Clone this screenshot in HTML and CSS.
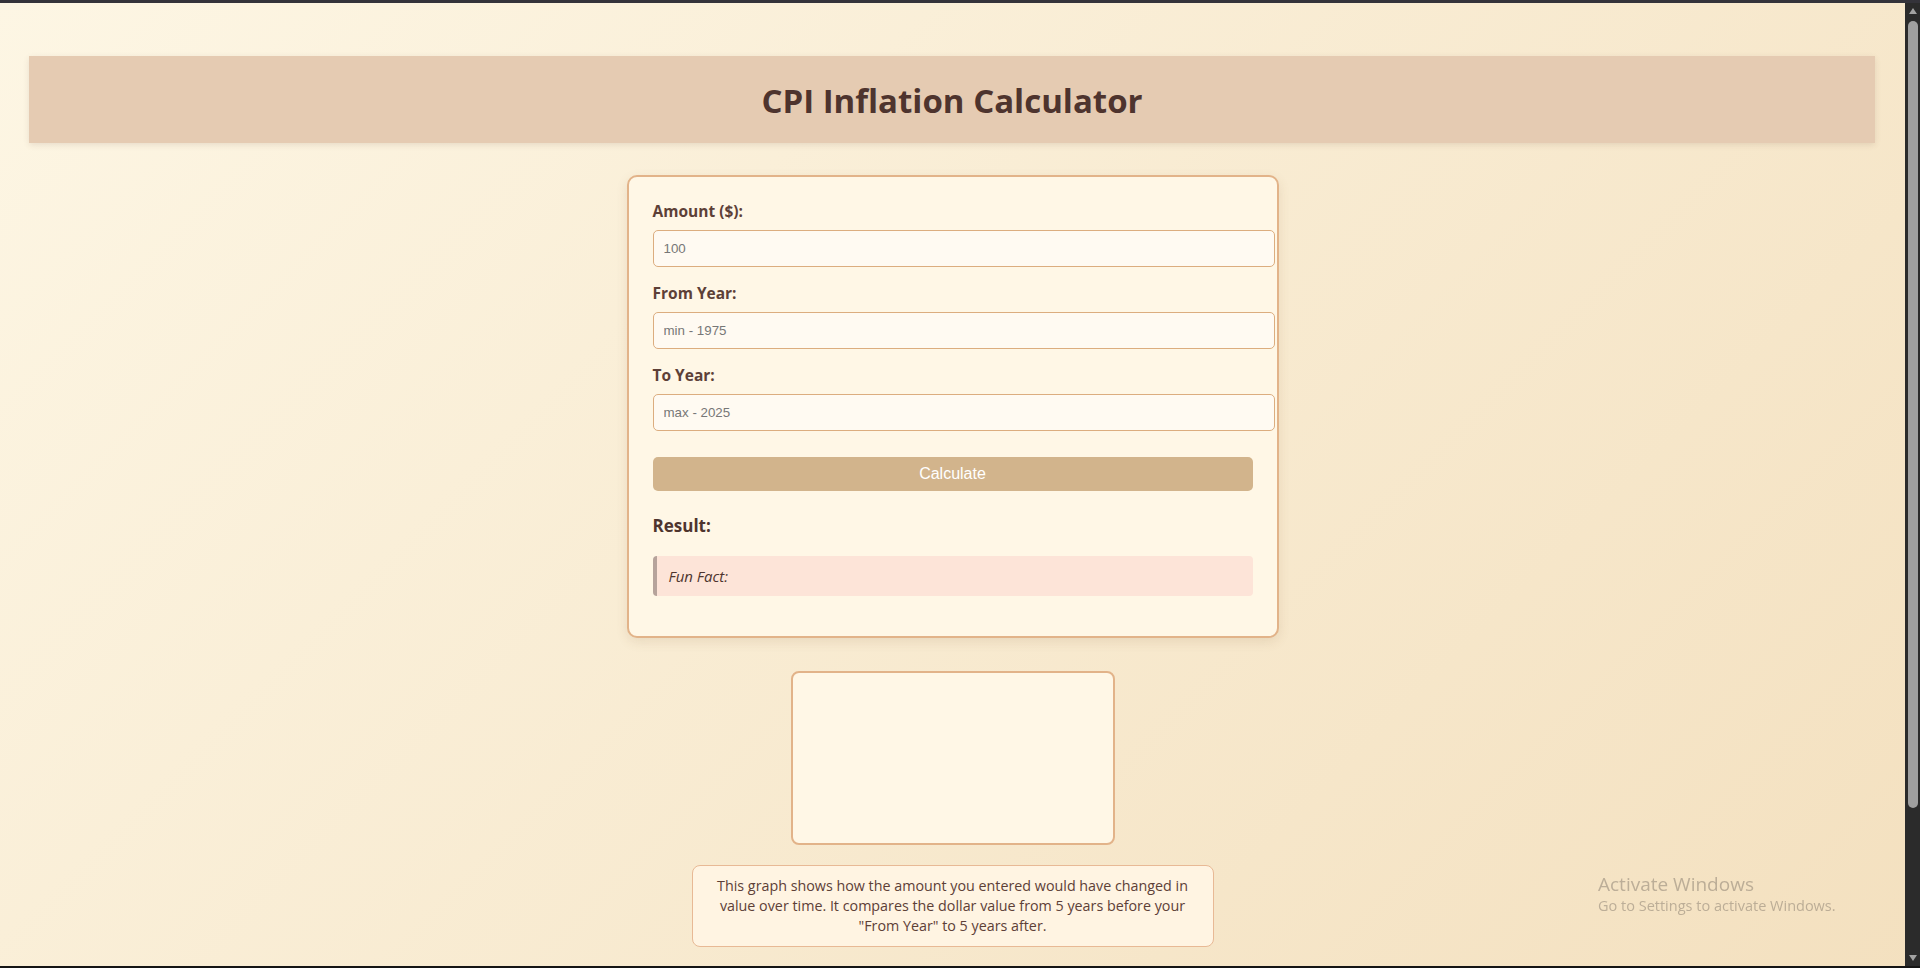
FILE: index.html
```html
<!DOCTYPE html>
<html lang="en">
<head>
<meta charset="UTF-8">
<title>CPI Inflation Calculator</title>
<link rel="stylesheet" href="styles.css">
</head>
<body>
  <header class="site-header">
    <h1 class="site-title">CPI Inflation Calculator</h1>
  </header>

  <main class="page">
    <section class="calculator">
      <label class="field-label" for="amount">Amount ($):</label>
      <input class="field-input" id="amount" type="number" placeholder="100">

      <label class="field-label" for="from-year">From Year:</label>
      <input class="field-input" id="from-year" type="number" placeholder="min - 1975">

      <label class="field-label" for="to-year">To Year:</label>
      <input class="field-input" id="to-year" type="number" placeholder="max - 2025">

      <button class="calc-button" type="button">Calculate</button>

      <div class="result">
        <h3 class="result-title">Result:</h3>
        <div class="fun-fact"><em>Fun Fact:</em></div>
      </div>
    </section>

    <div class="chart-box">
      <canvas class="chart-canvas" width="300" height="150"></canvas>
    </div>

    <p class="chart-info">This graph shows how the amount you entered would have changed in value over time. It compares the dollar value from 5 years before your "From Year" to 5 years after.</p>
  </main>

  <div class="scrollbar" aria-hidden="true">
    <div class="scroll-btn"><span class="arrow-up"></span></div>
    <div class="scroll-thumb"></div>
    <div class="scroll-track"></div>
    <div class="scroll-btn scroll-btn-down"><span class="arrow-down"></span></div>
  </div>
  <div class="frame-top"></div>
  <div class="frame-bottom"></div>
  <div class="watermark">
    <div class="watermark-title">Activate Windows</div>
    <div class="watermark-sub">Go to Settings to activate Windows.</div>
  </div>
</body>
</html>
```

FILE: styles.css
```css
html {
  background: #fdf6e4;
}

body {
  margin: 0 15px 0 0;
  padding: 0 0 198px;
  font-family: "Open Sans", "Noto Sans", sans-serif;
  color: #4e342e;
  background: linear-gradient(135deg, #fdf6e4 0%, #f3dfbd 100%);
}

.site-header {
  margin: 56px 30px 0 29px;
  padding: 22px 0 20px;
  background: #e5cbb2;
  box-shadow: 0 2px 6px rgba(90, 60, 40, 0.12);
  text-align: center;
}

.site-title {
  margin: 0;
  font-size: 33px;
  line-height: 45px;
  font-weight: 700;
  color: #4e342e;
}

.page {
  display: flex;
  flex-direction: column;
  align-items: center;
}

.calculator {
  width: 600px;
  margin-top: 32px;
  padding: 24px;
  background: #fff7e6;
  border: 2px solid #e2b389;
  border-radius: 10px;
  box-shadow: 0 4px 12px rgba(120, 80, 40, 0.12);
}

.field-label {
  display: block;
  margin-bottom: 8px;
  font-size: 15.5px;
  line-height: 21px;
  font-weight: 700;
  color: #5d4037;
}

.field-input {
  display: block;
  width: 100%;
  margin: 0 0 16px;
  padding: 10px;
  border: 1px solid #dcad7f;
  border-radius: 5px;
  background: #fffaf2;
  font-family: "Liberation Sans", Arial, sans-serif;
  font-size: 13.33px;
  line-height: 15px;
  color: #333;
  outline: none;
}

.field-input::placeholder {
  color: #777;
}

.calc-button {
  display: block;
  width: 100%;
  margin-top: 26px;
  padding: 8px;
  border: none;
  border-radius: 5px;
  background: #d2b48c;
  color: #fff;
  font-family: "Liberation Sans", Arial, sans-serif;
  font-size: 16px;
  line-height: 18px;
  cursor: pointer;
}

.result {
  margin-top: 23px;
}

.result-title {
  margin: 0 0 19px;
  font-size: 17px;
  line-height: 23px;
  font-weight: 700;
  color: #4e342e;
}

.fun-fact {
  margin-bottom: 16px;
  padding: 10px 12px;
  border-left: 4px solid #b6a39b;
  border-radius: 4px;
  background: #fde4d8;
  font-size: 15px;
  line-height: 20px;
  color: #4e342e;
}

.chart-box {
  margin-top: 33px;
  padding: 10px;
  background: #fff7e6;
  border: 2px solid #e2b389;
  border-radius: 8px;
}

.chart-canvas {
  display: block;
  width: 300px;
  height: 150px;
}

.chart-info {
  width: 500px;
  margin: 20px 0 0;
  padding: 10px;
  background: #fff4e2;
  border: 1px solid #e8b995;
  border-radius: 8px;
  font-size: 14.3px;
  line-height: 20px;
  text-align: center;
  color: #5d4037;
}

/* window chrome: scrollbar and frame edges */
.scrollbar {
  position: fixed;
  top: 0;
  right: 0;
  bottom: 0;
  width: 15px;
  display: flex;
  flex-direction: column;
  align-items: center;
  background: #2b2b2b;
}

.scroll-btn {
  height: 21px;
  width: 15px;
  display: flex;
  justify-content: center;
  align-items: flex-start;
  padding-top: 8px;
  box-sizing: border-box;
}

.scroll-btn-down {
  height: 15px;
  padding-top: 2px;
}

.arrow-up {
  width: 0;
  height: 0;
  margin-left: 1px;
  border-left: 4.5px solid transparent;
  border-right: 4.5px solid transparent;
  border-bottom: 6px solid #a2a2a2;
}

.arrow-down {
  width: 0;
  height: 0;
  margin-left: 1px;
  border-left: 4.5px solid transparent;
  border-right: 4.5px solid transparent;
  border-top: 6px solid #a2a2a2;
}

.scroll-thumb {
  width: 10px;
  height: 787px;
  margin-left: 1px;
  border-radius: 5px;
  background: #9f9f9f;
}

.scroll-track {
  flex: 1;
}

.frame-top {
  position: fixed;
  top: 0;
  left: 0;
  right: 0;
  height: 3px;
  background: #34333a;
}

.frame-bottom {
  position: fixed;
  bottom: 0;
  left: 0;
  right: 0;
  height: 2px;
  background: #151515;
}

.watermark {
  position: fixed;
  left: 1598px;
  top: 872px;
  color: rgba(110, 100, 90, 0.42);
  pointer-events: none;
}

.watermark-title {
  font-size: 19px;
  line-height: 24px;
}

.watermark-sub {
  font-size: 14.5px;
  line-height: 20px;
}
```
